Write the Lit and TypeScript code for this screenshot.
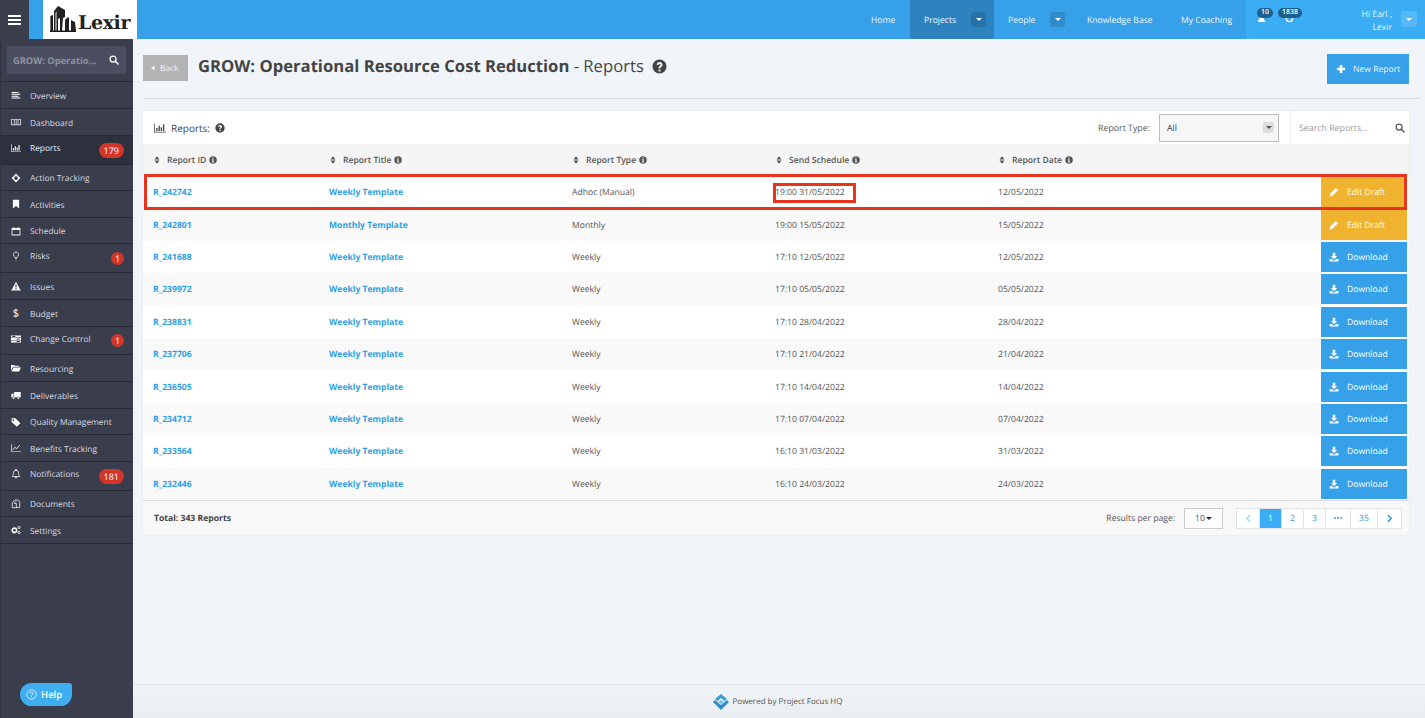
import { LitElement, html, css, svg } from "lit";
import { customElement } from "lit/decorators.js";

const paths: Record<string, any> = {
  overview: svg`<path d="M1 3h11v1.600H1zM1 6h14v1.600H1zM1 9h11v1.600H1zM1 12h14v1.600H1z" fill="currentColor"/>`,
  dashboard: svg`<path fill-rule="evenodd" d="M0 3h16v10H0zM1.500 4.500v7h3v-7zM6 4.500v7h1.600v-7zM9 4.500v7h1.600v-7zM12 4.500v7h2.500v-7z" fill="currentColor" opacity=".75"/>`,
  chart: svg`<path d="M0 2h1v11h15v1H0zM3 8h1.800v4H3zM6 5h1.800v7H6zM9 7h1.800v5H9zM12 3h1.800v9H12z" fill="currentColor"/>`,
  target: svg`<circle cx="8" cy="8" r="4" fill="none" stroke="currentColor" stroke-width="2"/><path d="M8 .5l2 3H6zM8 15.500l-2-3h4zM.5 8l3-2v4zM15.500 8l-3 2V6z" fill="currentColor"/>`,
  bookmark: svg`<path d="M3 1h10v14l-5-4-5 4z" fill="currentColor"/>`,
  calendar: svg`<path fill-rule="evenodd" d="M1 3h3V1.500h1.500V3h5V1.500H12V3h3v12H1zM2.300 6.500v7h11.400v-7z" fill="currentColor"/>`,
  bulb: svg`<path d="M8 1.500a4 4 0 0 0-2.400 7.200c.5.5.7 1 .7 1.800h3.400c0-.8.2-1.300.7-1.800A4 4 0 0 0 8 1.500z" fill="none" stroke="currentColor" stroke-width="1.200"/><path d="M6.300 11.800h3.400v1H6.300zM7 13.800h2v1H7z" fill="currentColor"/>`,
  warning: svg`<path fill-rule="evenodd" d="M8 1l7.500 14H.5zM7 6v4.500h2V6zM7 11.500v2h2v-2z" fill="currentColor"/>`,
  change: svg`<path fill-rule="evenodd" d="M0 2.500h16v3H0zM0 6.500h16v3H0zM0 10.500h16v3H0zM9 7.300v1.400h5V7.300zM2 3.300v1.400h5V3.300zM9 11.300v1.400h5v-1.400z" fill="currentColor"/>`,
  folder: svg`<path d="M0 3h5l1.500 1.500H13V6H3.500L0 12zM4 7h12l-3 6.500H.8z" fill="currentColor"/>`,
  truck: svg`<path d="M5 3h10.500v9H5zM1 6h3.200v6H.5V8z" fill="currentColor"/><circle cx="4" cy="13" r="1.800" fill="currentColor" stroke="#393d4c" stroke-width=".8"/><circle cx="12" cy="13" r="1.800" fill="currentColor" stroke="#393d4c" stroke-width=".8"/>`,
  tags: svg`<path fill-rule="evenodd" d="M1 2h6l8 8-5.500 5.500L1 8zM3.700 3.500a1.300 1.300 0 1 0 .01 0z" fill="currentColor"/>`,
  line: svg`<path d="M0 2h1v11h15v1H0z" fill="currentColor"/><path d="M2.500 11l3.500-4 3 2 5-5.500" fill="none" stroke="currentColor" stroke-width="1.400"/>`,
  bell: svg`<path d="M8 2a4 4 0 0 0-4 4c0 4-1.800 5-2 6h12c-.2-1-2-2-2-6a4 4 0 0 0-4-4z" fill="none" stroke="currentColor" stroke-width="1.200"/><path d="M7.200.5h1.600V2H7.200zM6.500 13h3A1.500 1.500 0 0 1 6.500 13z" fill="currentColor" stroke="currentColor" stroke-width=".6"/>`,
  docs: svg`<path d="M6 1.500h5l3 3v9H8M6 1.500L2 6v8h6.500V7H5L8.500 3.500" fill="none" stroke="currentColor" stroke-width="1.200"/>`,
  cogs: svg`<circle cx="5.500" cy="8.500" r="3.600" fill="none" stroke="currentColor" stroke-width="2.600"/><circle cx="13" cy="4" r="1.700" fill="none" stroke="currentColor" stroke-width="1.400"/><circle cx="13" cy="12" r="1.700" fill="none" stroke="currentColor" stroke-width="1.400"/>`,
  search: svg`<circle cx="6.500" cy="6.500" r="4.800" fill="none" stroke="currentColor" stroke-width="2"/><path d="M10 10l4.500 4.500" stroke="currentColor" stroke-width="2.400" stroke-linecap="round"/>`,
  question: svg`<path fill-rule="evenodd" d="M8 .5a7.500 7.500 0 1 0 0 15 7.500 7.500 0 0 0 0-15zM7 11.300h2v2H7zM5 6.200C5.200 4.500 6.500 3.300 8.200 3.300c1.700 0 3 1.200 3 2.800 0 1.200-.7 1.800-1.500 2.400-.5.400-.7.600-.7 1.300H7c0-1.300.5-1.900 1.300-2.500.6-.4.900-.7.900-1.200 0-.5-.4-.9-1-.9s-1.100.4-1.200 1.100z" fill="currentColor"/>`,
  info: svg`<path fill-rule="evenodd" d="M8 .5a7.500 7.500 0 1 0 0 15 7.500 7.500 0 0 0 0-15zM6.800 2.800h2.400v2.200H6.800zM5.800 6.300h3.400v5h1v1.800H5.800v-1.800h1v-3.200h-1z" fill="currentColor"/>`,
  sort: svg`<path d="M8 .5L13 7H3zM8 15.500L3 9h10z" fill="currentColor"/>`,
  pencil: svg`<path d="M11 1.500l3.500 3.500L5.500 14 1 15l1-4.500z" fill="currentColor"/>`,
  download: svg`<path d="M6 1h4v5.500h3L8 11.500 3 6.500h3zM1 11h3.500L8 14l3.500-3H15v4H1z" fill="currentColor"/>`,
  plus: svg`<path d="M6 1.500h4V6h4.500v4H10v4.500H6V10H1.500V6H6z" fill="currentColor"/>`,
  user: svg`<path d="M8 1l7 13H1z" fill="currentColor"/>`,
  globe: svg`<circle cx="8" cy="8" r="5.500" fill="none" stroke="currentColor" stroke-width="2.400"/>`,
  caretLeft: svg`<path d="M11 3v10L4 8z" fill="currentColor"/>`,
  chevL: svg`<path d="M11 2L5 8l6 6" fill="none" stroke="currentColor" stroke-width="2.800"/>`,
  chevR: svg`<path d="M5 2l6 6-6 6" fill="none" stroke="currentColor" stroke-width="2.800"/>`,
  help: svg`<circle cx="8" cy="8" r="6.800" fill="none" stroke="currentColor" stroke-width="1.100"/><path d="M5.800 6.300c.1-1.300 1-2 2.200-2s2.200.8 2.200 1.900c0 1.600-2.200 1.700-2.200 3.300" fill="none" stroke="currentColor" stroke-width="1.100"/><path d="M7.400 10.700h1.200v1.300H7.400z" fill="currentColor"/>`,
};

const ic = (name: string, cls = "") =>
  html`<svg class="ic ${cls}" viewBox="0 0 16 16" aria-hidden="true">${paths[name]}</svg>`;

const nav = [
  { label: "Overview", icon: "overview", h: 27 },
  { label: "Dashboard", icon: "dashboard", h: 27 },
  { label: "Reports", icon: "chart", h: 29, badge: "179", active: true },
  { label: "Action Tracking", icon: "target", h: 26 },
  { label: "Activities", icon: "bookmark", h: 27 },
  { label: "Schedule", icon: "calendar", h: 26 },
  { label: "Risks", icon: "bulb", h: 29, badge: "1" },
  { label: "Issues", icon: "warning", h: 27 },
  { label: "Budget", icon: "$", h: 27 },
  { label: "Change Control", icon: "change", h: 28, badge: "1" },
  { label: "Resourcing", icon: "folder", h: 27 },
  { label: "Deliverables", icon: "truck", h: 27 },
  { label: "Quality Management", icon: "tags", h: 26 },
  { label: "Benefits Tracking", icon: "line", h: 27 },
  { label: "Notifications", icon: "bell", h: 29, badge: "181" },
  { label: "Documents", icon: "docs", h: 26 },
  { label: "Settings", icon: "cogs", h: 27 },
];

const rows = [
  ["R_242742", "Weekly Template", "Adhoc (Manual)", "19:00 31/05/2022", "12/05/2022", "edit"],
  ["R_242801", "Monthly Template", "Monthly", "19:00 15/05/2022", "15/05/2022", "edit"],
  ["R_241688", "Weekly Template", "Weekly", "17:10 12/05/2022", "12/05/2022", "dl"],
  ["R_239972", "Weekly Template", "Weekly", "17:10 05/05/2022", "05/05/2022", "dl"],
  ["R_238831", "Weekly Template", "Weekly", "17:10 28/04/2022", "28/04/2022", "dl"],
  ["R_237706", "Weekly Template", "Weekly", "17:10 21/04/2022", "21/04/2022", "dl"],
  ["R_236505", "Weekly Template", "Weekly", "17:10 14/04/2022", "14/04/2022", "dl"],
  ["R_234712", "Weekly Template", "Weekly", "17:10 07/04/2022", "07/04/2022", "dl"],
  ["R_233564", "Weekly Template", "Weekly", "16:10 31/03/2022", "31/03/2022", "dl"],
  ["R_232446", "Weekly Template", "Weekly", "16:10 24/03/2022", "24/03/2022", "dl"],
];

const heads = ["Report ID", "Report Title", "Report Type", "Send Schedule", "Report Date"];

@customElement("app-root")
export class AppRoot extends LitElement {
  static styles = css`
    :host {
      display: flex;
      flex-direction: column;
      width: 1425px;
      height: 718px;
      overflow: hidden;
      font-family: "Open Sans", "Noto Sans", sans-serif;
      font-size: 8.600px;
      color: #555;
      background: #f1f5f9;
      text-rendering: geometricPrecision;
    }
    .ic { width: 10px; height: 10px; flex: none; display: block; }

    /* top bar */
    .top { height: 39px; flex: none; display: flex; background: #36a0e9; color: #eef7fe; }
    .burger { width: 29px; background: #393d4c; display: flex; align-items: center; justify-content: center; flex: none; }
    .burger i { display: block; width: 13px; height: 10px; border-top: 2px solid #fff; border-bottom: 2px solid #fff; position: relative; box-sizing: border-box; }
    .burger i::after { content: ""; position: absolute; left: 0; right: 0; top: 2px; height: 2px; background: #fff; }
    .logo { margin-left: 14px; width: 94px; background: #fff; display: flex; align-items: center; padding-left: 6px; box-sizing: border-box; flex: none; position: relative; z-index: 1; }
    .logo svg { width: 28px; height: 27px; flex: none; margin-bottom: 3px; }
    .logo span { font-family: "DejaVu Serif", serif; font-weight: 700; font-size: 19px; color: #222; letter-spacing: -0.4px; margin-top: 7px; margin-left: 1px; }
    .menu { margin-left: auto; display: flex; height: 100%; }
    .menu a { display: flex; align-items: center; box-sizing: border-box; padding-left: 11px; }
    .m-home { width: 50px; }
    .m-proj { width: 84px; padding-left: 14px !important; background: #2d83c0; }
    .m-people { width: 81px; padding-left: 14px !important; }
    .m-kb { width: 93px; padding-left: 12px !important; }
    .m-coach { width: 78px; padding-left: 13px !important; }
    .caret { width: 15px; height: 15px; border-radius: 3px; background: rgba(0,0,0,.13); display: flex; align-items: center; justify-content: center; margin-left: auto; flex: none; }
    .caret::after { content: ""; border: 3px solid transparent; border-top-color: #fff; border-bottom: 0; }
    .m-proj .caret { margin-right: 8px; }
    .m-people .caret { margin-right: 10px; }
    .status { width: 179px; background: #3badf5; display: flex; position: relative; flex: none; }
    .bell { position: absolute; top: 14px; color: #fff; }
    .bell .ic { width: 9px; height: 9px; }
    .bell b { position: absolute; top: -6px; height: 10px; border-radius: 5px; background: #1d5f8d; color: #fff; font-size: 7px; font-weight: 600; line-height: 10px; text-align: center; }
    .hi { position: absolute; right: 33px; top: 8px; text-align: right; line-height: 13px; }
    .status .caret { position: absolute; right: 8px; top: 11px; width: 16px; height: 16px; background: rgba(255,255,255,.14); }

    .body { flex: 1; display: flex; min-height: 0; }

    /* sidebar */
    .side { width: 133px; flex: none; background: #393d4c; color: #d8dae0; box-sizing: border-box; border-left: 1px solid #2f3340; font-size: 8.400px; }
    .sbox { height: 43px; box-sizing: border-box; padding: 7px 7px 0 6px; border-bottom: 1px solid #262a35; }
    .sbox div { height: 28px; background: #4a4e60; display: flex; align-items: center; justify-content: space-between; padding: 0 7px 0 6px; font-weight: 700; color: #8f929e; font-size: 9.300px; }
    .sbox .ic { color: #fff; }
    .item { display: flex; align-items: center; box-sizing: border-box; border-bottom: 1px solid #262a35; position: relative; padding-left: 10px; }
    .item.active { background: #2d303d; color: #eceef2; }
    .item .ic, .item .dollar { width: 10px; color: #fff; }
    .item .ic { height: 10px; }
    .dollar { font-size: 11px; text-align: center; }
    .item .lbl { margin: 2px 0 0 9px; }
    .item.has .lbl { margin-top: 0; margin-bottom: 3px; }
    .item.has > .ic { margin-bottom: 4px; }
    .badge { margin-left: auto; margin-right: 9px; background: #d2362a; color: #fff; border-radius: 8px; height: 15px; padding: 0 5px; line-height: 15px; text-align: center; font-size: 9px; }
    .badge.one { padding: 0; width: 13px; border-radius: 50%; height: 13px; line-height: 13px; }
    .helpwrap { position: relative; }
    .help { position: absolute; left: 19px; top: 139px; width: 52px; height: 23px; background: #3eaef0; color: #fff; border-radius: 12px 3px 12px 12px; display: flex; align-items: center; padding-left: 6px; box-sizing: border-box; gap: 4px; font-size: 9.500px; font-weight: 600; }
    .help .ic { width: 11px; height: 11px; }

    /* main */
    .main { flex: 1; display: flex; flex-direction: column; min-width: 0; }
    .head { height: 60px; flex: none; box-sizing: border-box; margin: 0 4px 0 10px; border-bottom: 1px solid #d6dbe1; display: flex; align-items: flex-start; position: relative; }
    .back { margin-top: 16px; width: 45px; height: 26px; background: #b3b3b3; color: #f3f3f3; display: flex; align-items: center; box-sizing: border-box; padding-left: 6px; gap: 3px; font-size: 8.500px; }
    .back .ic { width: 8px; height: 8px; }
    h1 { margin: 15px 0 0 10px; font-size: 16.650px; line-height: 24px; font-weight: 400; color: #444; display: flex; align-items: center; white-space: pre; }
    h1 b { font-weight: 700; }
    h1 .ic { width: 15px; height: 15px; margin-left: 8px; color: #444; }
    .new { position: absolute; right: 12px; top: 15px; width: 82px; height: 30px; background: #36a0e9; color: #e9f5fd; display: flex; align-items: center; box-sizing: border-box; padding-left: 9px; gap: 7px; }
    .new .ic { width: 10px; height: 10px; color: #fff; }

    .card { margin: 12px 16px 0 10px; height: 424px; flex: none; display: flex; flex-direction: column; background: #fff; box-shadow: 0 0 2px rgba(0,0,0,.08); }
    .bar { height: 33px; flex: none; display: flex; align-items: center; padding-left: 11px; color: #444; font-size: 10px; }
    .bar .ic { width: 12px; height: 12px; }
    .bar .t { margin: 0 5px 0 5px; }
    .bar .q { width: 10px; height: 10px; }
    .rt { margin-left: auto; margin-right: 9px; font-size: 8.800px; color: #555; }
    .sel { width: 120px; height: 28px; box-sizing: border-box; border: 1px solid #bbb; background: #f6f6f6; display: flex; align-items: center; padding: 0 4px 0 7px; font-size: 8.800px; }
    .sel i { margin-left: auto; width: 11px; height: 11px; background: #ddd; border-radius: 2px; display: flex; align-items: center; justify-content: center; }
    .sel i::after { content: ""; border: 3px solid transparent; border-top-color: #555; border-bottom: 0; }
    .srch { margin-left: 11px; width: 119px; height: 100%; box-sizing: border-box; border-left: 1px solid #eee; display: flex; align-items: center; padding: 0 4px 0 8px; color: #999; font-size: 8.800px; }
    .srch .ic { margin-left: auto; color: #555; width: 10px; height: 10px; }

    .grid { display: grid; grid-template-columns: 176px 243px 203px 223px 1fr 88px; align-items: center; }
    .thead { height: 32px; flex: none; background: #f5f5f5; color: #555; padding-left: 10px; font-weight: 600; }
    .th { display: flex; align-items: center; }
    .th .sort { width: 8px; height: 10px; margin-right: 6px; color: #555; }
    .th .inf { width: 8px; height: 8px; margin-left: 3px; color: #555; }
    .list { flex: 1; display: grid; grid-template-rows: repeat(10, 1fr); min-height: 0; }
    .row { padding-left: 10px; background: #fff; position: relative; }
    .row.odd { background: #f9f9f9; }
    .row.first { z-index: 1; background: #fff; }
    a.l { color: #2f9fe6; font-weight: 700; }
    .btn { height: 30px; width: 86px; display: flex; align-items: center; box-sizing: border-box; color: #fff; }
    .btn.edit { background: #f0b32f; padding-left: 8px; gap: 8px; }
    .btn.dl { background: #36a0e9; padding-left: 8px; gap: 8px; }
    .btn .ic { width: 10px; height: 10px; }
    .hl { position: absolute; left: 1px; top: -2px; width: 1263px; height: 36px; box-sizing: border-box; border: 3px solid #e8341c; pointer-events: none; }
    .hl2 { position: absolute; left: 630px; top: 7px; width: 83px; height: 20px; box-sizing: border-box; border: 3px solid #e8341c; pointer-events: none; }

    .foot { height: 35px; flex: none; background: #f8f8f8; border-top: 1px solid #ddd; box-sizing: border-box; display: flex; align-items: center; padding: 0 7px 0 11px; }
    .foot b { color: #444; font-weight: 700; }
    .rpp { margin-left: auto; margin-right: 9px; }
    .dd { width: 39px; height: 21px; box-sizing: border-box; border: 1px solid #ccc; background: #fdfdfd; display: flex; align-items: center; justify-content: center; gap: 1px; margin-right: 13px; }
    .dd::after { content: ""; border: 3px solid transparent; border-top-color: #333; border-bottom: 0; }
    .pg { display: flex; height: 21px; border: 1px solid #e3e3e3; box-sizing: border-box; background: #fff; }
    .pg span { display: flex; align-items: center; justify-content: center; color: #36a0e9; border-right: 1px solid #e3e3e3; box-sizing: border-box; }
    .pg span:last-child { border-right: 0; }
    .pg .cur { background: #3badf5; color: #fff; }
    .pg .ic { width: 9px; height: 9px; }
    .pg .dim { color: #a9d8f5; }

    .bottom { margin-top: auto; height: 34px; flex: none; box-sizing: border-box; border-top: 1px solid #dfe3e7; background: linear-gradient(180deg, #f1f5f9, #e9edf0); display: flex; align-items: center; justify-content: center; gap: 3px; font-size: 8px; color: #555; padding-right: 4px; }
    .bottom svg { width: 18px; height: 18px; }
  `;

  render() {
    return html`
      <div class="top">
        <div class="burger"><i></i></div>
        <div class="logo">
          <svg viewBox="0 0 28 27" aria-hidden="true">
            <defs>
              <linearGradient id="lg" x1="0" x2="1" y1="0" y2="0">
                <stop offset="0" stop-color="#999" />
                <stop offset=".5" stop-color="#222" />
                <stop offset="1" stop-color="#111" />
              </linearGradient>
            </defs>
            <path d="M1 26V11l3-1v16z" fill="url(#lg)" />
            <path d="M5 26V6l4-5 7 4v7l-2 1-1 13h-2V13l-2 1v12z" fill="#222" />
            <path d="M6 26V8l2-2v20z" fill="#888" />
            <path d="M16 26V15l3-3 1 1v13zM22 26V15l4 2 1 9z" fill="#222" />
            <path d="M1 25.500h26V27H1z" fill="#1a1a1a" />
          </svg>
          <span>Lexir</span>
        </div>
        <div class="menu">
          <a class="m-home">Home</a>
          <a class="m-proj">Projects<span class="caret"></span></a>
          <a class="m-people">People<span class="caret"></span></a>
          <a class="m-kb">Knowledge Base</a>
          <a class="m-coach">My Coaching</a>
          <div class="status">
            <div class="bell" style="left:11px">${ic("user")}<b style="left:0;width:16px">10</b></div>
            <div class="bell" style="left:39px">${ic("globe")}<b style="left:-7px;width:24px">1838</b></div>
            <div class="hi">Hi Earl ,<br />Lexir</div>
            <span class="caret"></span>
          </div>
        </div>
      </div>
      <div class="body">
        <aside class="side">
          <div class="sbox"><div><span>GROW: Operatio...</span>${ic("search")}</div></div>
          ${nav.map(
            (n) => html`<div class="item ${n.active ? "active" : ""} ${n.badge ? "has" : ""}" style="height:${n.h}px">
              ${n.icon === "$" ? html`<span class="dollar">$</span>` : ic(n.icon)}
              <span class="lbl">${n.label}</span>
              ${n.badge ? html`<span class="badge ${n.badge === "1" ? "one" : ""}">${n.badge}</span>` : ""}
            </div>`
          )}
          <div class="helpwrap"><div class="help">${ic("help")}Help</div></div>
        </aside>
        <main class="main">
          <div class="head">
            <div class="back">${ic("caretLeft")}Back</div>
            <h1><b>GROW: Operational Resource Cost Reduction</b> - Reports${ic("question")}</h1>
            <div class="new">${ic("plus")}New Report</div>
          </div>
          <section class="card">
            <div class="bar">
              ${ic("chart")}<span class="t">Reports:</span>${ic("question", "q")}
              <span class="rt">Report Type:</span>
              <div class="sel">All<i></i></div>
              <div class="srch">Search Reports...${ic("search")}</div>
            </div>
            <div class="grid thead">
              ${heads.map(
                (h) => html`<div class="th">${ic("sort", "sort")}${h}${ic("info", "inf")}</div>`
              )}
            </div>
            <div class="list">
              ${rows.map(
                (r, i) => html`<div class="grid row ${i % 2 ? "odd" : ""} ${i === 0 ? "first" : ""}">
                  <a class="l">${r[0]}</a>
                  <a class="l">${r[1]}</a>
                  <span>${r[2]}</span>
                  <span>${r[3]}</span>
                  <span>${r[4]}</span>
                  ${r[5] === "edit"
                    ? html`<div class="btn edit">${ic("pencil")}Edit Draft</div>`
                    : html`<div class="btn dl">${ic("download")}Download</div>`}
                  ${i === 0 ? html`<div class="hl"></div><div class="hl2"></div>` : ""}
                </div>`
              )}
            </div>
            <div class="foot">
              <b>Total: 343 Reports</b>
              <span class="rpp">Results per page:</span>
              <div class="dd">10</div>
              <div class="pg">
                <span class="dim" style="width:23px">${ic("chevL")}</span>
                <span class="cur" style="width:22px">1</span>
                <span style="width:22px">2</span>
                <span style="width:22px">3</span>
                <span style="width:25px">•••</span>
                <span style="width:27px">35</span>
                <span style="width:23px">${ic("chevR")}</span>
              </div>
            </div>
          </section>
          <footer class="bottom">
            <svg viewBox="0 0 18 18" aria-hidden="true">
              <path d="M9 1l6 5-2.500 2L9 5 5.500 8 3 6z" fill="#3b9bd6"/>
              <path d="M1 9l2-2 6 5 6-5 2 2-8 8z" fill="#2f8cc8"/>
              <path d="M9 7l2.500 2L9 11 6.500 9z" fill="#6db9e6"/>
            </svg>
            Powered by Project Focus HQ
          </footer>
        </main>
      </div>
    `;
  }
}
